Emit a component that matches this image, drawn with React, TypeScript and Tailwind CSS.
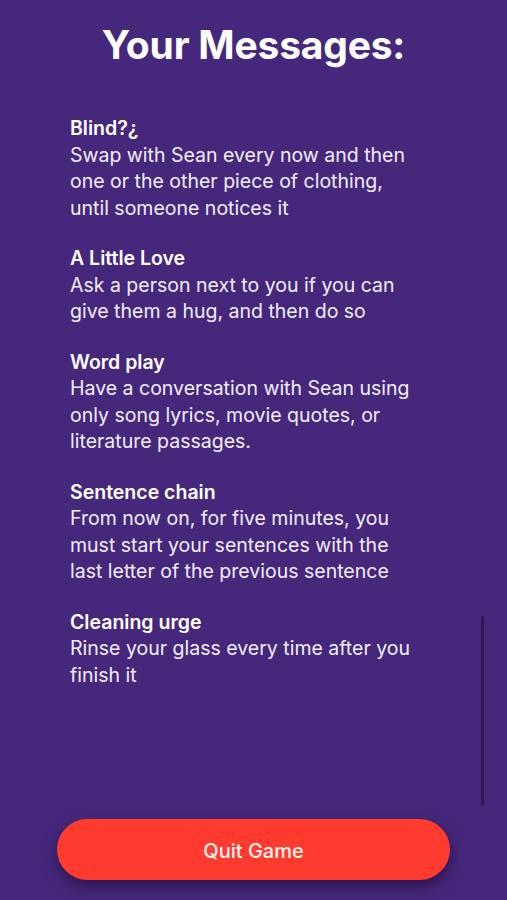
const messages = [
  {
    title: "Blind?¿",
    body: "Swap with Sean every now and then one or the other piece of clothing, until someone notices it",
  },
  {
    title: "A Little Love",
    body: "Ask a person next to you if you can give them a hug, and then do so",
  },
  {
    title: "Word play",
    body: "Have a conversation with Sean using only song lyrics, movie quotes, or literature passages.",
  },
  {
    title: "Sentence chain",
    body: "From now on, for five minutes, you must start your sentences with the last letter of the previous sentence",
  },
  {
    title: "Cleaning urge",
    body: "Rinse your glass every time after you finish it",
  },
];

export default function App() {
  return (
    <div
      className="relative flex h-[900px] w-full flex-col overflow-hidden bg-[#45287b] text-white"
      style={{ fontFamily: "Inter, 'Noto Sans', sans-serif" }}
    >
      {/* Header */}
      <h1 className="pt-[20px] text-center text-[39px] font-bold leading-[50px] tracking-[-0.2px]">
        Your Messages:
      </h1>

      {/* Message list */}
      <div className="mt-[45px] flex flex-col gap-[24px] pl-[70px] pr-[92px]">
        {messages.map((m, i) => (
          <div key={i} className="text-[19.5px] leading-[26.5px]">
            <h3 className="font-semibold text-white">{m.title}</h3>
            <p className="text-[#f3eefa]">{m.body}</p>
          </div>
        ))}
      </div>

      {/* scroll indicator */}
      <div className="absolute left-[481px] top-[616px] h-[190px] w-[3px] rounded-full bg-[#2f1a58]" />

      <div className="mt-auto px-[57px] pb-[20px]">
        <button className="h-[61px] w-full rounded-full bg-[#ff3b30] pt-[3px] text-[20px] font-medium text-[#fff3f0] shadow-[0_6px_14px_rgba(20,5,40,0.55)]">
          Quit Game
        </button>
      </div>
    </div>
  );
}
